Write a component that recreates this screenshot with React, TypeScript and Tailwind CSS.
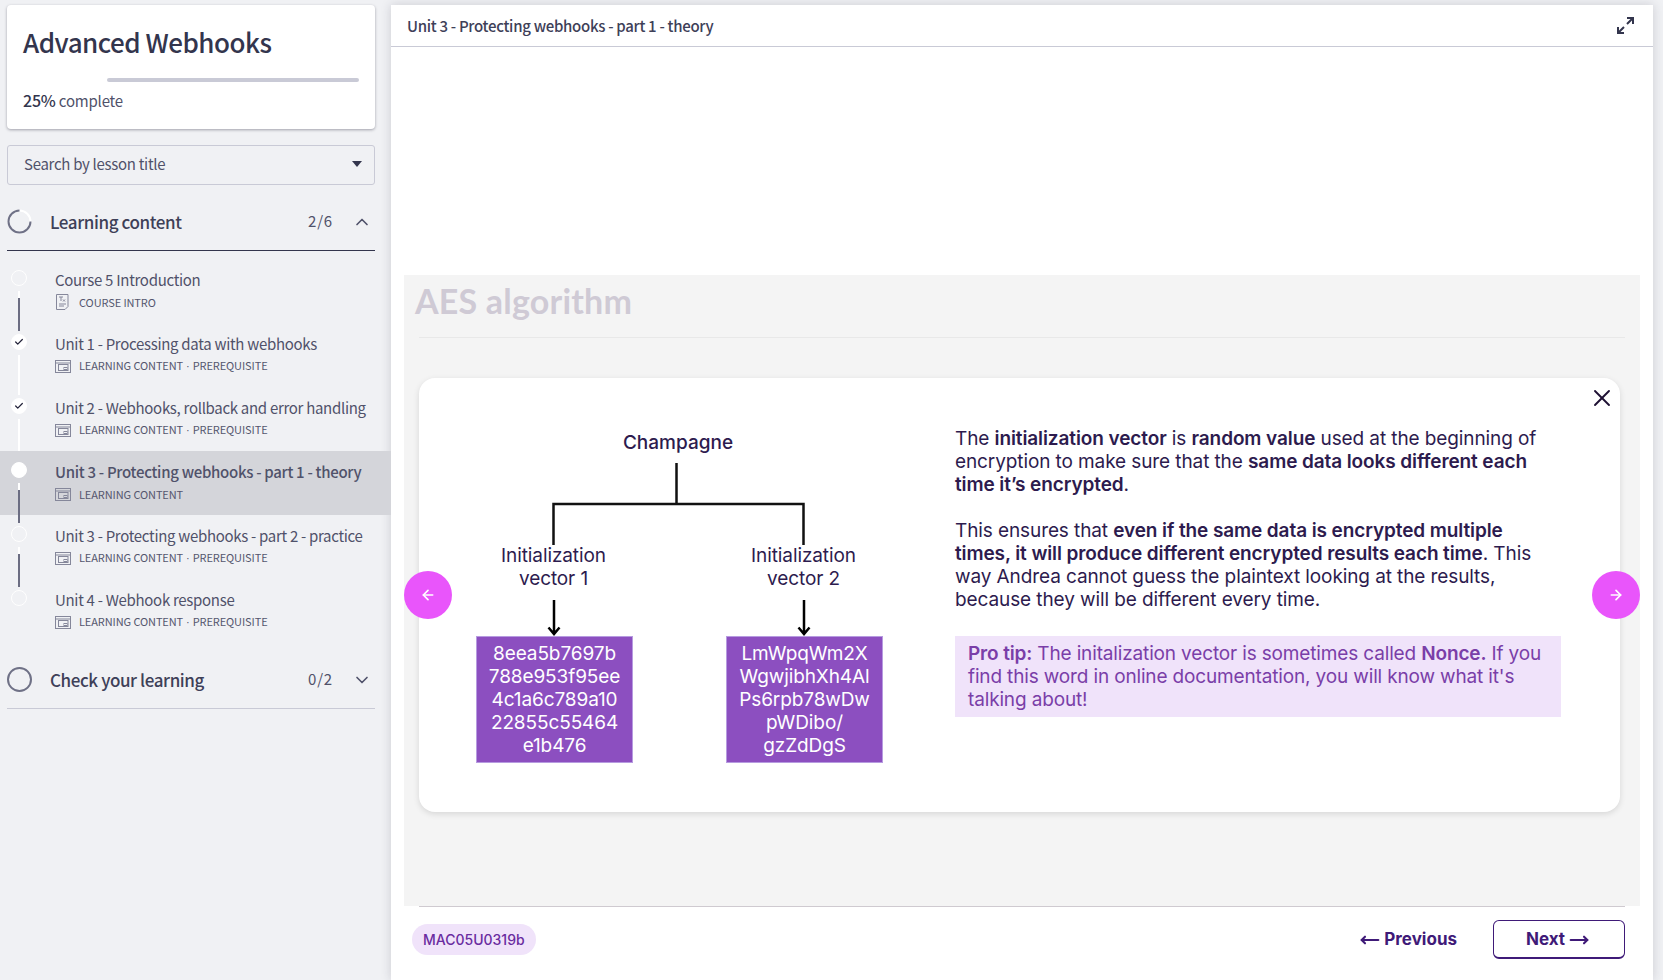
import { ArrowLeft, ArrowRight, Check, ChevronDown, ChevronUp, MoveLeft, MoveRight, X } from 'lucide-react';

const sans = 'font-["Noto_Sans_CJK_SC","Source_Sans_Pro",sans-serif]';

type Lesson = {
  title: string;
  kind: string;
  prerequisite?: boolean;
  state: 'todo' | 'done' | 'active';
  icon?: 'doc' | 'window';
  track?: 'light' | 'dark' | 'none';
};

const lessons: Lesson[] = [
  { title: 'Course 5 Introduction', kind: 'COURSE INTRO', state: 'todo', icon: 'doc', track: 'dark' },
  { title: 'Unit 1 - Processing data with webhooks', kind: 'LEARNING CONTENT', prerequisite: true, state: 'done', track: 'light' },
  { title: 'Unit 2 - Webhooks, rollback and error handling', kind: 'LEARNING CONTENT', prerequisite: true, state: 'done', track: 'light' },
  { title: 'Unit 3 - Protecting webhooks - part 1 - theory', kind: 'LEARNING CONTENT', state: 'active', track: 'dark' },
  { title: 'Unit 3 - Protecting webhooks - part 2 - practice', kind: 'LEARNING CONTENT', prerequisite: true, state: 'todo', track: 'dark' },
  { title: 'Unit 4 - Webhook response', kind: 'LEARNING CONTENT', prerequisite: true, state: 'todo', track: 'none' },
];

function WindowIcon() {
  return (
    <svg width="16" height="13" viewBox="0 0 16 13" fill="none" stroke="#85879a" strokeWidth="1" className="shrink-0">
      <rect x="0.5" y="0.5" width="15" height="12" />
      <path d="M0.5 3h15" />
      <rect x="3.500" y="4.500" width="9.500" height="6" />
      <rect x="9" y="7.500" width="3" height="2" />
    </svg>
  );
}

function DocIcon() {
  return (
    <svg width="13" height="16" viewBox="0 0 13 16" fill="none" stroke="#85879a" strokeWidth="1" className="ml-[1px] mr-[2px] shrink-0">
      <path d="M0.500 0.500h11.500v12l-3 3h-8.500z" />
      <path d="M3 3h4M5 3v4M7 5.500l2 2M9 5.500l-2 2M3 10h7M3 12h5" />
    </svg>
  );
}

function LessonRow({ lesson }: { lesson: Lesson }) {
  const active = lesson.state === 'active';
  return (
    <div className={`relative h-16 pl-[55px] pt-[10px] ${active ? 'bg-[#d4d5da]' : ''}`}>
      <div
        className={`absolute left-[11px] top-[11px] flex h-4 w-4 items-center justify-center rounded-full border border-white ${
          lesson.state === 'todo' ? '' : 'bg-white'
        }`}
      >
        {lesson.state === 'done' && <Check size={10} strokeWidth={3} className="text-[#23233a]" />}
      </div>
      {lesson.track !== 'none' && (
        <div className="absolute left-[18px] top-[32px] h-10 w-[2px] bg-white">
          {lesson.track === 'dark' && <div className="mt-[7px] h-[33px] w-[2px] bg-[#6b6d82]" />}
        </div>
      )}
      <div className={`whitespace-nowrap text-[15px] leading-[22px] tracking-[-0.3px] text-[#50526a] ${active ? 'font-medium text-[#3e4058]' : ''}`}>
        {lesson.title}
      </div>
      <div className="mt-[2px] flex h-[18px] items-center gap-2 whitespace-pre text-[11px] tracking-[-0.1px] text-[#54566e]">
        {lesson.icon === 'doc' ? <DocIcon /> : <WindowIcon />}
        <span>
          {lesson.kind}
          {lesson.prerequisite && (
            <>
              <span className="mx-[3px] font-['Liberation_Sans',sans-serif]">·</span>
              PREREQUISITE
            </>
          )}
        </span>
      </div>
    </div>
  );
}

function Sidebar() {
  return (
    <aside className={`w-[391px] shrink-0 pt-[5px] ${sans}`}>
      <div className="ml-[7px] mr-[16px] h-[124px] rounded-[4px] bg-white px-4 pt-[17px] shadow-[0_1px_3px_rgba(40,40,60,0.4)]">
        <h1 className="text-[26px] font-medium leading-[40px] tracking-[-0.5px] text-[#33354d]">Advanced Webhooks</h1>
        <div className="mt-[16px] ml-[84px] h-1 rounded-sm bg-[#c9cad6]" />
        <div className="mt-[6px] text-[15px] leading-[24px] tracking-[-0.2px] text-[#50526a]">
          <span className="text-[16px] font-medium text-[#33354d]">25%</span> complete
        </div>
      </div>

      <div className="ml-[7px] mr-[16px] mt-4 flex h-10 items-center justify-between rounded-[3px] border border-[#c9cad6] pb-[2px] pl-4 pr-[12px] text-[15px] tracking-[-0.3px] text-[#50526a]">
        Search by lesson title
        <span className="h-0 w-0 border-x-[5px] border-t-[6px] border-x-transparent border-t-[#33354d]" />
      </div>

      <div className="ml-[7px] mr-[16px] mt-[15px] flex h-[51px] items-center border-b border-[#33354d] pb-[7px]">
        <svg width="25" height="25" viewBox="0 0 25 25" fill="none" className="shrink-0">
          <circle cx="12.500" cy="12.500" r="11" stroke="#ffffff" strokeWidth="2" />
          <path d="M12.500 1.500a11 11 0 1 0 11 11" stroke="#6f7186" strokeWidth="2" />
        </svg>
        <span className="ml-[18px] flex-1 text-[17px] font-medium tracking-[-0.4px] text-[#3e4058]">Learning content</span>
        <span className="text-[15px] tracking-[0.8px] text-[#50526a]">2/6</span>
        <ChevronUp size={20} className="ml-[19px] mr-[3px] text-[#50526a]" />
      </div>

      <div className="mt-[8px]">
        {lessons.map((lesson) => (
          <LessonRow key={lesson.title} lesson={lesson} />
        ))}
      </div>

      <div className="ml-[7px] mr-[16px] mt-[5px] flex h-[61px] items-center border-b border-[#c9cad6] pt-[3px]">
        <span className="h-[25px] w-[25px] shrink-0 rounded-full border-2 border-[#6f7186]" />
        <span className="ml-[18px] flex-1 text-[17px] font-medium tracking-[-0.4px] text-[#3e4058]">Check your learning</span>
        <span className="text-[15px] tracking-[0.8px] text-[#50526a]">0/2</span>
        <ChevronDown size={20} className="ml-[19px] mr-[3px] text-[#50526a]" />
      </div>
    </aside>
  );
}

function ArrowDown() {
  return (
    <svg width="14" height="36" viewBox="0 0 14 36" fill="none" stroke="#000" strokeWidth="2.500" className="mx-auto">
      <path d="M7 0v34M1.500 27.500L7 34l5.500-6.500" />
    </svg>
  );
}

function VectorColumn({ label, lines }: { label: string; lines: string[] }) {
  return (
    <div className="w-[157px] text-center">
      <div className="pr-[2px] text-[19px] leading-[23px] tracking-[-0.1px] text-[#2d1b4e]">
        Initialization
        <br />
        {label}
      </div>
      <div className="mt-[10px] pr-[2px]">
        <ArrowDown />
      </div>
      <div className="h-[127px] border border-[#b79be0] bg-[#8c4fc0] pt-[5px] text-[19px] leading-[23px] tracking-[-0.1px] text-white">
        {lines.map((line) => (
          <div key={line}>{line}</div>
        ))}
      </div>
    </div>
  );
}

function Diagram() {
  return (
    <div className="ml-[57px] w-[407px] shrink-0 pt-[52px]">
      <div className="pr-[3px] text-center text-[19px] font-medium leading-[26px] text-[#2d1b4e]">Champagne</div>
      <svg width="407" height="82" viewBox="0 0 407 82" fill="none" stroke="#111" strokeWidth="2.500" className="mt-[7px] block">
        <path d="M200.500 0v41M77.500 82V41h250v41" />
      </svg>
      <div className="-mt-[1px] flex justify-between">
        <VectorColumn label="vector 1" lines={['8eea5b7697b', '788e953f95ee', '4c1a6c789a10', '22855c55464', 'e1b476']} />
        <VectorColumn label="vector 2" lines={['LmWpqWm2X', 'WgwjibhXh4Al', 'Ps6rpb78wDw', 'pWDibo/', 'gzZdDgS']} />
      </div>
    </div>
  );
}

function SlideText() {
  return (
    <div className="ml-[72px] w-[606px] pt-[49px] text-[19px] leading-[23px] tracking-[-0.1px] text-[#2d1b4e]">
      <p>
        The <b className="font-semibold">initialization vector</b> is <b className="font-semibold">random value</b> used at the beginning of encryption to
        make sure that the <b className="font-semibold">same data looks different each time it’s encrypted</b>.
      </p>
      <p className="mt-[23px]">
        This ensures that <b className="font-semibold">even if the same data is encrypted multiple times, it will produce different encrypted results each time</b>. This way Andrea
        cannot guess the plaintext looking at the results, because they will be different every time.
      </p>
      <div className="mt-[25px] bg-[#f0e3fa] px-[13px] py-[6px] tracking-[-0.15px] text-[#7a3ea8]">
        <b className="font-semibold">Pro tip:</b> The initalization vector is sometimes called <b className="font-semibold">Nonce.</b> If you find this word in online
        documentation, you will know what it's talking about!
      </div>
    </div>
  );
}

function NavCircle({ side }: { side: 'left' | 'right' }) {
  return (
    <button
      type="button"
      className={`absolute top-[296px] flex h-12 w-12 items-center justify-center rounded-full bg-[#e955fb] text-white ${
        side === 'left' ? 'left-0' : 'right-0'
      }`}
    >
      {side === 'left' ? <ArrowLeft size={16} strokeWidth={2.500} /> : <ArrowRight size={16} strokeWidth={2.500} />}
    </button>
  );
}

function Slide() {
  return (
    <div className="relative mx-[13px] mt-[228px] h-[631px] bg-[#f4f4f4] px-[15px] font-['Inter',sans-serif]">
      <h2 className="-ml-[4px] pt-[6px] font-['Lato',sans-serif] text-[34px] font-bold leading-[40px] tracking-[0.2px] text-[#cfcad5]">AES algorithm</h2>
      <div className="mt-[16px] h-px bg-[#e8e8e8]" />
      <div className="relative mt-[40px] flex h-[434px] w-[1201px] rounded-2xl bg-white shadow-[0_2px_6px_rgba(0,0,0,0.12)]">
        <Diagram />
        <SlideText />
        <X size={28} strokeWidth={1.600} className="absolute right-[4px] top-[6px] text-[#1e1033]" />
      </div>
      <NavCircle side="left" />
      <NavCircle side="right" />
    </div>
  );
}

function Footer() {
  return (
    <div className="ml-[28px] mr-[28px] font-['Inter',sans-serif]">
      <div className="h-px bg-[#cfcad0]" />
      <div className="flex items-center justify-between pt-[13px]">
        <span className="-ml-[7px] rounded-full bg-[#f0e3fa] px-[11px] py-[7px] text-[14px] font-medium leading-[17px] text-[#6a2ca0]">MAC05U0319b</span>
        <div className="flex items-center gap-[36px] font-bold text-[#3f1a78]">
          <span className="flex items-center gap-[4px] text-[17px]">
            <MoveLeft size={20} strokeWidth={2.500} /> Previous
          </span>
          <span className="flex h-[39px] w-[132px] items-center justify-center gap-[4px] rounded-md border border-b-2 border-[#3f1a78] pr-[3px] pt-[1px] text-[17px]">
            Next <MoveRight size={20} strokeWidth={2.500} />
          </span>
        </div>
      </div>
    </div>
  );
}

export default function App() {
  return (
    <div className="flex h-[980px] overflow-hidden bg-[#f0f1f4]">
      <Sidebar />
      <main className="mr-[10px] mt-[5px] min-w-0 flex-1 bg-white shadow-[0_0_10px_rgba(40,40,60,0.18)]">
        <div className={`flex h-[42px] items-center justify-between border-b border-[#c9cad6] pl-4 pr-[19px] text-[15px] font-medium tracking-[-0.3px] text-[#3e4058] ${sans}`}>
          <span className="pt-[1px]">Unit 3 - Protecting webhooks - part 1 - theory</span>
          <svg width="17" height="17" viewBox="0 0 17 17" fill="none" stroke="#33354d" strokeWidth="2">
            <path d="M10 1h6v6M16 1l-6 6M1 10v6h6M1 16l6-6" />
          </svg>
        </div>
        <Slide />
        <Footer />
      </main>
    </div>
  );
}
